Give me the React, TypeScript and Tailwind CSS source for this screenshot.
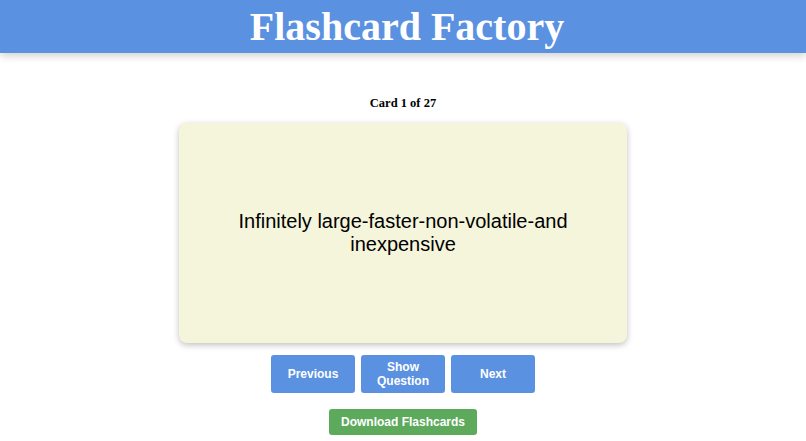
import { useState } from "react";

const cards = [
  {
    question: "What are the ideal properties of memory?",
    answer: "Infinitely large-faster-non-volatile-and inexpensive",
  },
];

export default function App() {
  const [index] = useState(0);
  const [showAnswer, setShowAnswer] = useState(true);
  const card = cards[index];

  return (
    <div className="min-h-screen bg-white">
      <header className="flex h-[53px] items-center justify-center bg-[#5b91e1] pl-[8px] shadow-[0_3px_8px_rgba(0,0,0,0.18)]">
        <h1 className="font-['Liberation_Serif',serif] text-[40px] font-bold leading-none text-white">
          Flashcard Factory
        </h1>
      </header>

      <main className="flex flex-col items-center pt-[41px] font-['Liberation_Sans',Arial,sans-serif]">
        <p className="font-['Liberation_Serif',serif] text-[12.5px] font-bold text-black">
          Card 1 of 27
        </p>

        <div className="mt-[10px] flex h-[220px] w-[448px] items-center justify-center rounded-lg bg-[#f5f5dc] px-10 text-center shadow-[0_2px_6px_rgba(0,0,0,0.25)]">
          <p className="text-[20px] leading-[23px] text-black">
            {showAnswer ? card.answer : card.question}
          </p>
        </div>

        <div className="mt-[12px] flex gap-[6px]">
          <button className="h-[38px] w-[84px] rounded-[3px] bg-[#5b91e1] text-[12px] font-bold text-white">
            Previous
          </button>
          <button
            onClick={() => setShowAnswer(!showAnswer)}
            className="h-[38px] w-[84px] rounded-[3px] bg-[#5b91e1] px-3 text-[12px] font-bold leading-[14px] text-white"
          >
            Show Question
          </button>
          <button className="h-[38px] w-[84px] rounded-[3px] bg-[#5b91e1] text-[12px] font-bold text-white">
            Next
          </button>
        </div>

        <button className="mt-[16px] h-[26px] w-[148px] rounded-[3px] bg-[#5daa5d] text-[12px] font-bold text-white">
          Download Flashcards
        </button>
      </main>
    </div>
  );
}
